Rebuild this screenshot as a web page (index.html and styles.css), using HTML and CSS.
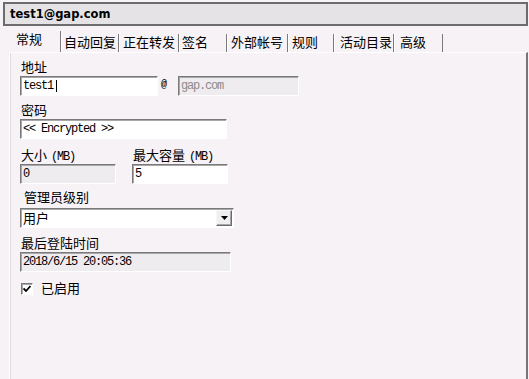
FILE: index.html
```html
<!DOCTYPE html>
<html>
<head>
<meta charset="utf-8">
<link rel="stylesheet" href="styles.css">
</head>
<body>
<div class="app">
  <div class="title">test1@gap.com</div>
  <div class="tabs">
    <div class="tab sel t1">常规</div>
    <div class="tab t2">自动回复</div>
    <div class="tab t3">正在转发</div>
    <div class="tab t4">签名</div>
    <div class="tab t5">外部帐号</div>
    <div class="tab t6">规则</div>
    <div class="tab t7">活动目录</div>
    <div class="tab t8">高级</div>
  </div>
  <div class="panel">
    <div class="grp g1">
      <div class="lbl">地址</div>
      <div class="row">
        <div class="inp w-user"><span class="mono">test1</span><span class="caret"></span></div>
        <span class="at">@</span>
        <div class="inp dis w-domain"><span class="mono gray">gap.com</span></div>
      </div>
    </div>
    <div class="grp g2">
      <div class="lbl">密码</div>
      <div class="inp w-pass"><span class="mono">&lt;&lt; Encrypted &gt;&gt;</span></div>
    </div>
    <div class="grp g3 cols">
      <div class="col">
        <div class="lbl">大小<span class="mono mb">(MB)</span></div>
        <div class="inp dis w-size"><span class="mono">0</span></div>
      </div>
      <div class="col">
        <div class="lbl">最大容量<span class="mono mb">(MB)</span></div>
        <div class="inp w-size"><span class="mono">5</span></div>
      </div>
    </div>
    <div class="grp g4">
      <div class="lbl lbl-ind">管理员级别</div>
      <div class="select">
        <span class="sel-text">用户</span>
        <span class="drop"><svg width="7" height="4" viewBox="0 0 7 4"><path d="M0 0H7L3.5 4Z" fill="#000"/></svg></span>
      </div>
    </div>
    <div class="grp g5">
      <div class="lbl">最后登陆时间</div>
      <div class="inp dis w-date"><span class="mono">2018/6/15 20:05:36</span></div>
    </div>
    <div class="grp g6 check-row">
      <span class="cb"><svg width="8" height="8" viewBox="0 0 8 8"><path d="M0.5 3.5L3 6L7.5 1" fill="none" stroke="#000" stroke-width="1.8"/></svg></span>
      <span class="cb-text">已启用</span>
    </div>
  </div>
</div>
</body>
</html>
```

FILE: styles.css
```css
body {
  margin: 0;
  background: #f6f2f6;
  font-family: "Noto Sans CJK SC", "Noto Sans", sans-serif;
  font-size: 13px;
  color: #000;
}

.app {
  height: 379px;
  display: flex;
  flex-direction: column;
}

.title {
  margin: 2px 1px 0 3px;
  height: 24px;
  box-sizing: border-box;
  border: 2px solid #6c6c6c;
  background: #e6e3e6;
  font-family: "DejaVu Sans", sans-serif;
  font-weight: bold;
  font-size: 11.5px;
  line-height: 17px;
  padding: 2px 0 0 5px;
}

.tabs {
  display: flex;
  align-items: flex-end;
  height: 21px;
  margin: 5px 0 0 10px;
}

.tab {
  box-sizing: border-box;
  height: 18px;
  line-height: 16px;
  border-left: 1px solid #ffffff;
  border-right: 1px solid #7a7a7a;
  padding-left: 2px;
  white-space: nowrap;
}

.tab.sel {
  height: 21px;
  border-left: none;
  padding-left: 6px;
}

.t1 { width: 51px; }
.t2 { width: 58px; }
.t3 { width: 60px; padding-left: 3px; }
.t4 { width: 48px; }
.t5 { width: 61px; padding-left: 3px; }
.t6 { width: 46px; padding-left: 3px; }
.t7 { width: 60px; padding-left: 5px; }
.t8 { width: 49px; padding-left: 5px; }

.panel {
  flex: 1;
  margin: 0 1px 0 9px;
  border-top: 1px solid #ffffff;
  border-left: 1px solid #ffffff;
  border-right: 2px solid #767676;
  box-shadow: inset 1px 0 0 #dedade;
  padding-left: 10px;
}

.grp { display: flex; flex-direction: column; }
.g1 { margin-top: 6px; }
.g2 { margin-top: 6px; }
.g3 { margin-top: 8px; }
.g4 { margin-top: 5px; }
.g5 { margin-top: 7px; }
.g6 { margin-top: 8px; }

.cols {
  flex-direction: row;
  gap: 16px;
}

.col { display: flex; flex-direction: column; }

.lbl {
  height: 16px;
  line-height: 16px;
  padding-left: 1px;
  margin-bottom: 1px;
  white-space: nowrap;
}

.lbl-ind {
  padding-left: 4px;
  margin-bottom: 3px;
}

.mb { margin-left: 4px; }

.row {
  display: flex;
  align-items: flex-start;
}

.inp {
  box-sizing: border-box;
  height: 20px;
  border-top: 1px solid #7a7a7a;
  border-left: 1px solid #7a7a7a;
  border-bottom: 1px solid #ffffff;
  border-right: 1px solid #ffffff;
  box-shadow: inset 1px 1px 0 #a8a8a8;
  background: #ffffff;
  padding-left: 2px;
  line-height: 17px;
  display: flex;
  align-items: center;
}

.inp.dis { background: #efecef; }

.w-user { width: 138px; }
.w-domain { width: 121px; }
.w-pass { width: 207px; }
.w-size { width: 96px; }
.w-date { width: 211px; }

.mono {
  font-family: "Liberation Mono", monospace;
  font-size: 12px;
  letter-spacing: -1.2px;
  white-space: pre;
}

.gray { color: #8c8a8c; }

.caret {
  display: inline-block;
  width: 1px;
  height: 12px;
  background: #000;
  margin-left: 3px;
}

.at {
  box-sizing: border-box;
  width: 20px;
  padding-left: 3px;
  font-family: "Liberation Mono", monospace;
  font-weight: bold;
  font-size: 10px;
  line-height: 18px;
}

.select {
  box-sizing: border-box;
  width: 214px;
  height: 20px;
  border-top: 1px solid #7a7a7a;
  border-left: 1px solid #7a7a7a;
  border-bottom: 1px solid #ffffff;
  border-right: 1px solid #ffffff;
  box-shadow: inset 1px 1px 0 #a8a8a8;
  background: #ffffff;
  display: flex;
  align-items: center;
  justify-content: space-between;
  padding: 1px 1px 1px 2px;
}

.sel-text { line-height: 16px; }

.drop {
  box-sizing: border-box;
  width: 16px;
  height: 16px;
  background: #f0eef0;
  border-top: 1px solid #f8f8f8;
  border-left: 1px solid #f8f8f8;
  border-right: 1px solid #6a6a6a;
  border-bottom: 1px solid #6a6a6a;
  box-shadow: inset -1px -1px 0 #a8a8a8;
  display: flex;
  align-items: center;
  justify-content: center;
}

.check-row {
  flex-direction: row;
  align-items: flex-start;
  height: 16px;
}

.cb {
  box-sizing: border-box;
  width: 12px;
  height: 12px;
  margin: 3px 0 0 1px;
  background: #ffffff;
  border-top: 1px solid #7a7a7a;
  border-left: 1px solid #7a7a7a;
  border-bottom: 1px solid #ffffff;
  border-right: 1px solid #ffffff;
  box-shadow: inset 1px 1px 0 #a8a8a8;
  display: flex;
  align-items: center;
  justify-content: center;
}

.cb-text {
  margin-left: 8px;
  line-height: 16px;
}
```
